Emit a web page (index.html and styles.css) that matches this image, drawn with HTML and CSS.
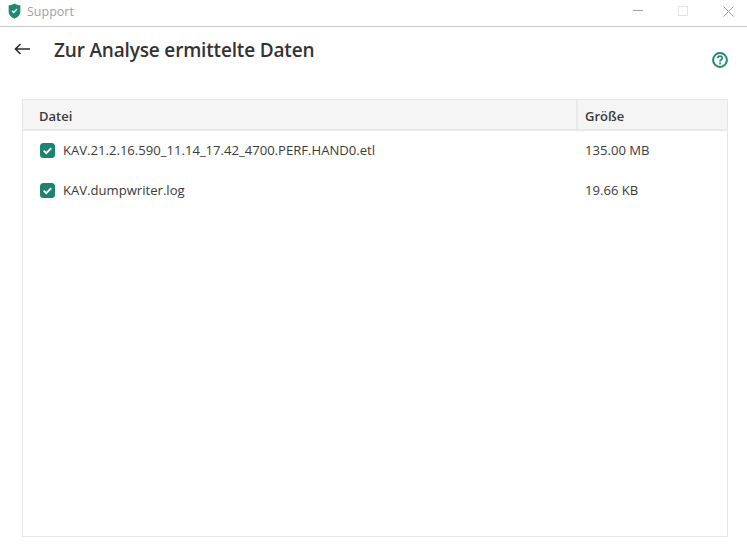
FILE: index.html
```html
<!DOCTYPE html>
<html lang="de">
<head>
<meta charset="utf-8">
<title>Support</title>
<link rel="stylesheet" href="styles.css">
</head>
<body>
<div class="window">
  <header class="titlebar">
    <svg class="shield" width="13" height="16" viewBox="0 0 14 18"><path d="M7 .5C9 1.8 11 2.4 13.6 2.6V9.5C13.6 13.4 10.8 16 7 17.6 3.2 16 .4 13.4.4 9.5V2.6C3 2.4 5 1.8 7 .5Z" fill="#1d8a72"/><path d="M4.2 8.6 6.2 10.6 9.8 6.8" fill="none" stroke="#fff" stroke-width="1.6"/></svg>
    <span class="app-name">Support</span>
    <div class="controls">
      <svg width="10" height="2" viewBox="0 0 10 2"><rect width="10" height="1" fill="#a0a0a0"/></svg>
      <svg width="10" height="10" viewBox="0 0 10 10"><rect x=".5" y=".5" width="9" height="9" fill="none" stroke="#e4e4e4"/></svg>
      <svg width="11" height="11" viewBox="0 0 11 11"><path d="M.5.5 10.5 10.5M10.5.5.5 10.5" stroke="#9a9a9a" fill="none"/></svg>
    </div>
  </header>
  <div class="page-head">
    <svg class="back" width="16" height="12" viewBox="0 0 16 12"><path d="M16 6H1.5M6.5 1 1.5 6 6.5 11" fill="none" stroke="#2b2b2b" stroke-width="1.6"/></svg>
    <h1>Zur Analyse ermittelte Daten</h1>
    <svg class="help" width="16" height="16" viewBox="0 0 16 16"><circle cx="8" cy="8" r="6.9" fill="none" stroke="#1d8a72" stroke-width="2"/><path d="M5.7 6.3C5.8 3.5 10.3 3.5 10.3 6.1 10.3 7.8 8 7.7 8 9.4" fill="none" stroke="#1d8a72" stroke-width="1.7"/><rect x="7.1" y="10.6" width="1.8" height="1.8" fill="#1d8a72"/></svg>
  </div>
  <section class="table">
    <div class="row head">
      <div class="col-name">Datei</div>
      <div class="col-size">Größe</div>
    </div>
    <div class="row item">
      <div class="col-name">
        <svg class="check" width="15" height="15" viewBox="0 0 15 15"><rect width="15" height="15" rx="3.5" fill="#1d8270"/><path d="M3.7 7.6 6.3 10.1 11.2 5.2" fill="none" stroke="#fff" stroke-width="1.9"/></svg>
        <span>KAV.21.2.16.590_11.14_17.42_4700.PERF.HAND0.etl</span>
      </div>
      <div class="col-size">135.00 MB</div>
    </div>
    <div class="row item">
      <div class="col-name">
        <svg class="check" width="15" height="15" viewBox="0 0 15 15"><rect width="15" height="15" rx="3.5" fill="#1d8270"/><path d="M3.7 7.6 6.3 10.1 11.2 5.2" fill="none" stroke="#fff" stroke-width="1.9"/></svg>
        <span>KAV.dumpwriter.log</span>
      </div>
      <div class="col-size">19.66 KB</div>
    </div>
  </section>
</div>
</body>
</html>
```
FILE: styles.css
```css
* { box-sizing: border-box; }
html, body { margin: 0; height: 100%; background: #fff; }
body { font-family: "Open Sans", "Noto Sans", sans-serif; color: #2f2f2f; overflow: hidden; }
.window { height: 560px; display: flex; flex-direction: column; }
.titlebar { height: 27px; flex: none; border-bottom: 1px solid #c9c9c9; display: flex; align-items: center; padding: 0 13px 4px 8px; }
.shield { flex: none; margin-bottom: 1px; }
.app-name { margin-left: 6px; font-size: 12.5px; color: #a29ea6; }
.controls { margin-left: auto; display: flex; align-items: center; gap: 35px; }
.page-head { height: 72px; flex: none; display: flex; align-items: flex-start; padding: 16px 19px 0 14px; }
.back { flex: none; }
h1 { margin: -5px 0 0 24px; font-size: 19px; line-height: 24px; font-weight: 600; color: #333; letter-spacing: -.17px; }
.help { margin: 9px 0 0 auto; flex: none; }
.table { margin: 0 19px 0 22px; height: 438px; border: 1px solid #e6e6e6; }
.row { display: grid; grid-template-columns: 553px 1fr; align-items: center; }
.head { height: 31px; background: #f5f5f5; border-bottom: 2px solid #e9e9e9; font-size: 13px; font-weight: 600; color: #3a3a3a; }
.head .col-name { padding: 2px 0 0 16px; }
.head .col-size { height: 100%; display: flex; align-items: center; border-left: 2px solid #e9e9e9; padding: 2px 0 0 7px; }
.item { height: 40px; padding-bottom: 2px; font-size: 13.1px; color: #3a3a3a; }
.item .col-name { display: flex; align-items: center; gap: 8px; padding-left: 17px; }
.item .col-size { padding-left: 9px; }
.check { flex: none; }
```
